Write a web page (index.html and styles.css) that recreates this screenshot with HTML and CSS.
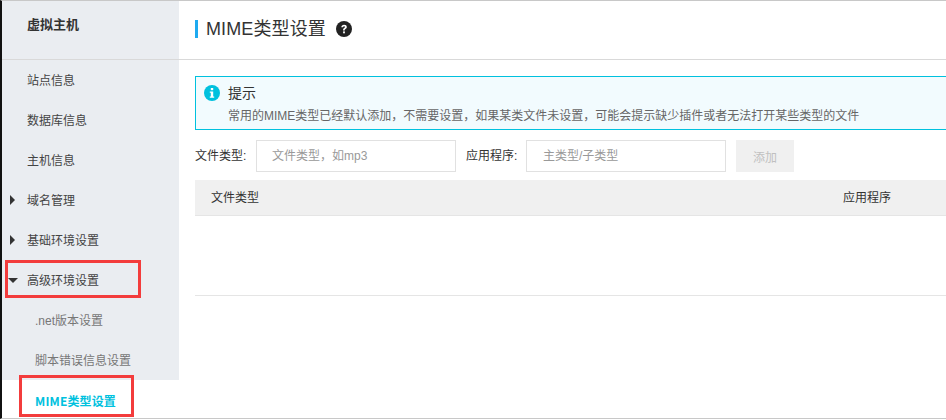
FILE: index.html
```html
<!DOCTYPE html>
<html lang="zh-CN">
<head>
<meta charset="utf-8">
<title>MIME类型设置</title>
<link rel="stylesheet" href="styles.css">
</head>
<body>
<div class="app">
  <aside class="side">
    <div class="side-head">虚拟主机</div>
    <nav class="menu">
      <a class="item">站点信息</a>
      <a class="item">数据库信息</a>
      <a class="item">主机信息</a>
      <a class="item"><i class="arrow"></i>域名管理</a>
      <a class="item"><i class="arrow"></i>基础环境设置</a>
      <a class="item"><i class="arrow down"></i>高级环境设置</a>
      <a class="item sub">.net版本设置</a>
      <a class="item sub">脚本错误信息设置</a>
      <a class="item sub active">MIME类型设置</a>
    </nav>
  </aside>
  <main class="main">
    <header class="head">
      <h1 class="title">MIME类型设置</h1>
      <svg class="help" width="16" height="16" viewBox="0 0 16 16"><circle cx="8" cy="8" r="8" fill="#222"/><path d="M5.3 6.2C5.4 4.6 6.5 3.7 8.1 3.7c1.6 0 2.7.9 2.7 2.2 0 1-.5 1.5-1.3 2-.6.4-.8.7-.8 1.3v.3H7.1v-.5c0-.9.3-1.4 1-1.9.6-.4.9-.7.9-1.1 0-.5-.4-.8-.9-.8-.6 0-1 .4-1.1 1z" fill="#fff"/><rect x="7.1" y="10.4" width="1.8" height="1.9" fill="#fff"/></svg>
    </header>
    <div class="body">
      <section class="notice">
        <svg class="info" width="16" height="16" viewBox="0 0 16 16"><circle cx="8" cy="8" r="8" fill="#00c1de"/><rect x="6.8" y="3" width="2.4" height="2.2" fill="#fff"/><path d="M5.8 6.5h3.4v5h1v1.2H5.8v-1.2h1V7.7h-1z" fill="#fff"/></svg>
        <div class="notice-text">
          <div class="notice-title">提示</div>
          <div class="notice-desc">常用的MIME类型已经默认添加，不需要设置，如果某类文件未设置，可能会提示缺少插件或者无法打开某些类型的文件</div>
        </div>
      </section>
      <form class="form">
        <label class="label">文件类型:</label>
        <input class="input" placeholder="文件类型，如mp3">
        <label class="label second">应用程序:</label>
        <input class="input" placeholder="主类型/子类型">
        <button class="btn" type="button" disabled>添加</button>
      </form>
      <div class="table-head">
        <span class="col-a">文件类型</span>
        <span class="col-b">应用程序</span>
      </div>
      <div class="table-empty"></div>
    </div>
  </main>
  <div class="mark mark-a"></div>
  <div class="mark mark-b"></div>
</div>
</body>
</html>
```
FILE: styles.css
```css
* { box-sizing: border-box; }
html, body { margin: 0; padding: 0; background: #fff; }
body {
  width: 946px;
  height: 420px;
  overflow: hidden;
  font-family: "Liberation Sans", "Noto Sans CJK SC", sans-serif;
  font-size: 12px;
  color: #333;
}
.app {
  position: relative;
  display: flex;
  width: 946px;
  height: 419px;
  border-top: 1px solid #c8c8c8;
  border-bottom: 1px solid #c8c8c8;
  border-left: 2px solid #111;
  overflow: hidden;
}
.side { width: 177px; flex: none; }
.side-head {
  height: 59px;
  padding: 14px 0 0 25px;
  line-height: 20px;
  font-size: 13px;
  font-weight: 700;
  color: #333;
  background: #eaedf1;
  border-bottom: 1px solid #d9d9d9;
}
.menu { display: flex; flex-direction: column; }
.item {
  position: relative;
  display: block;
  height: 40px;
  line-height: 42px;
  padding-left: 25px;
  background: #eaedf1;
  color: #444;
}
.item.sub { padding-left: 33px; color: #777; }
.item.active {
  background: #fff;
  color: #00c1de;
  font-family: "Noto Sans CJK SC", sans-serif;
  font-weight: 700;
  letter-spacing: .15px;
}
.arrow {
  position: absolute;
  left: 8px;
  top: 15px;
  width: 0;
  height: 0;
  border-left: 5px solid #333;
  border-top: 5px solid transparent;
  border-bottom: 5px solid transparent;
}
.arrow.down {
  left: 6px;
  top: 18px;
  border-top: 5px solid #333;
  border-left: 5px solid transparent;
  border-right: 5px solid transparent;
  border-bottom: 0;
}
.main { flex: 1; min-width: 0; }
.head {
  display: flex;
  align-items: center;
  height: 59px;
  padding: 0 0 3px 16px;
  border-bottom: 1px solid #d9d9d9;
}
.title {
  margin: 0;
  padding-left: 8px;
  border-left: 3px solid #1eaaf0;
  height: 18px;
  line-height: 18px;
  font-size: 18px;
  font-weight: 400;
  letter-spacing: .12px;
  color: #333;
  white-space: nowrap;
}
.help { margin-left: 10px; }
.body { padding: 16px 0 0 16px; width: 767px; }
.notice {
  display: flex;
  height: 54px;
  padding: 8px 0 0 8px;
  background: #f2fbfe;
  border: 1px solid #00c1de;
  border-right: 0;
}
.info { flex: none; }
.notice-text { margin-left: 8px; }
.notice-title { font-size: 14px; line-height: 16px; color: #333; }
.notice-desc { font-size: 12px; line-height: 20px; margin-top: 5px; color: #666; white-space: nowrap; }
.form { display: flex; align-items: center; margin-top: 10px; height: 32px; }
.label { width: 61px; flex: none; color: #333; padding-bottom: 4px; }
.label.second { width: 61px; margin-left: 10px; }
.input {
  width: 200px;
  height: 32px;
  flex: none;
  padding: 0 15px;
  border: 1px solid #e1e1e1;
  background: #fff;
  font: inherit;
  outline: 0;
}
.label.second + .input { margin-left: -1px; padding-left: 16px; }
.input::placeholder { color: #999; opacity: 1; }
.btn {
  width: 58px;
  height: 32px;
  margin-left: 10px;
  padding: 0;
  border: 0;
  background: #f0f0f0;
  color: #c0c0c0;
  font: inherit;
}
.table-head {
  position: relative;
  display: flex;
  height: 36px;
  margin-top: 8px;
  padding-left: 16px;
  line-height: 36px;
  color: #333;
  background: #f0f0f0;
  border-bottom: 1px solid #e5e5e5;
}
.col-a { width: 632px; flex: none; }
.table-empty { height: 80px; border-bottom: 1px solid #e5e5e5; }
.mark { position: absolute; border: 3px solid #f33c3c; }
.mark-a { left: 3px; top: 259px; width: 136px; height: 38px; }
.mark-b { left: 17px; top: 374px; width: 115px; height: 42px; }
```
